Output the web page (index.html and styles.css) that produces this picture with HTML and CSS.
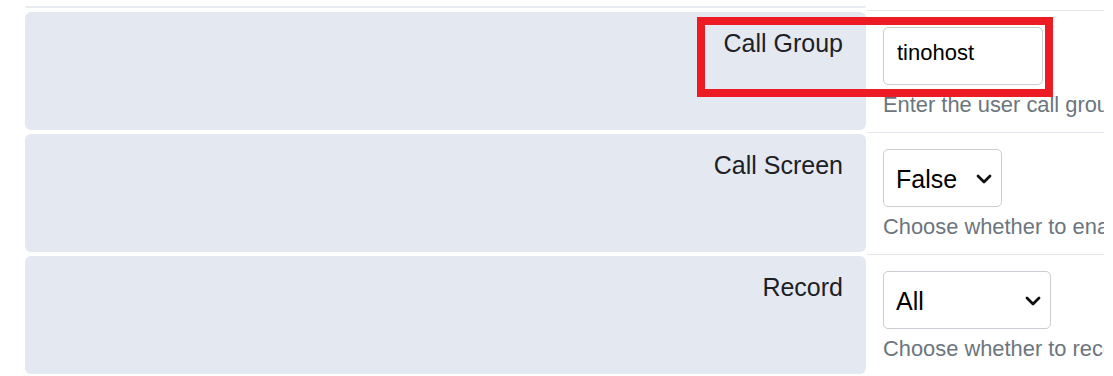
FILE: index.html
```html
<!DOCTYPE html>
<html lang="en">
<head>
<meta charset="utf-8">
<title>Extension settings</title>
<link rel="stylesheet" href="styles.css">
</head>
<body>
<div class="page">
  <div class="form">
    <div class="label tail"></div>
    <div class="value tail-value"></div>

    <div class="label">Call Group</div>
    <div class="value">
      <input class="text-input" type="text" value="tinohost">
      <div class="help">Enter the user call group here. Groups available to the user</div>
    </div>

    <div class="label">Call Screen</div>
    <div class="value">
      <span class="select-wrap">
        <select class="select select-false"><option>False</option><option>True</option></select>
        <svg class="chev" width="16" height="10" viewBox="0 0 16 10"><path d="M2 2 L8 8 L14 2" fill="none" stroke="#111" stroke-width="2.8" stroke-linecap="round" stroke-linejoin="round"/></svg>
      </span>
      <div class="help">Choose whether to enable or disable call screening</div>
    </div>

    <div class="label">Record</div>
    <div class="value">
      <span class="select-wrap">
        <select class="select select-all"><option>All</option><option>Local</option><option>Inbound</option></select>
        <svg class="chev" width="16" height="10" viewBox="0 0 16 10"><path d="M2 2 L8 8 L14 2" fill="none" stroke="#111" stroke-width="2.8" stroke-linecap="round" stroke-linejoin="round"/></svg>
      </span>
      <div class="help">Choose whether to record calls for this extension</div>
    </div>
  </div>
  <div class="highlight"></div>
</div>
</body>
</html>
```

FILE: styles.css
```css
html, body {
  margin: 0;
  padding: 0;
  background: #ffffff;
}

body {
  width: 1113px;
  height: 376px;
  overflow: hidden;
  font-family: "Liberation Sans", Arial, sans-serif;
  color: #212529;
}

.page {
  position: relative;
  width: 1113px;
  height: 376px;
}

.form {
  display: grid;
  grid-template-columns: 841px 237px;
  grid-template-rows: 8px 118px 118px 118px;
  column-gap: 1px;
  row-gap: 4px;
  margin-left: 25px;
  width: 1079px;
}

.label {
  background: #e4e8f1;
  border-radius: 6px;
  font-size: 25px;
  line-height: 1.5;
  text-align: right;
  padding: 13px 23px 0 0;
  box-sizing: border-box;
  white-space: nowrap;
  color: #1d2126;
}

.label.tail {
  align-self: end;
  height: 2px;
  border-radius: 0 0 2px 2px;
  padding: 0;
  background: #e8ebf2;
}

.value {
  margin-top: -2px;
  border-top: 1px solid #e2e6ee;
  padding: 16px 0 0 16px;
  overflow: hidden;
  white-space: nowrap;
  box-sizing: border-box;
}

.value.tail-value {
  margin-top: 0;
  border-top: 0;
  padding: 0;
}

.text-input {
  display: block;
  box-sizing: border-box;
  width: 160px;
  height: 58px;
  margin: 0;
  padding: 0 13px 6px;
  border: 1px solid #c9cdd4;
  border-radius: 5px;
  background: #ffffff;
  font-family: "Liberation Sans", Arial, sans-serif;
  font-size: 22px;
  color: #000000;
  outline: none;
}

.select-wrap {
  position: relative;
  display: block;
  width: max-content;
}

.select {
  display: block;
  box-sizing: border-box;
  height: 58px;
  margin: 0;
  padding: 2px 0 0 12px;
  border: 1px solid #c9cdd4;
  border-radius: 5px;
  background: #ffffff;
  font-family: "Liberation Sans", Arial, sans-serif;
  font-size: 25px;
  color: #000000;
  -webkit-appearance: none;
  appearance: none;
  outline: none;
}

.select-false {
  width: 119px;
}

.select-all {
  width: 168px;
}

.chev {
  position: absolute;
  right: 10px;
  top: 25px;
  pointer-events: none;
}

.help {
  margin-top: 4px;
  font-size: 21.875px;
  line-height: 1.5;
  color: #6c757d;
}

.highlight {
  position: absolute;
  left: 697px;
  top: 17px;
  width: 356px;
  height: 80px;
  box-sizing: border-box;
  border: 8px solid #ed1c24;
  pointer-events: none;
}
```
